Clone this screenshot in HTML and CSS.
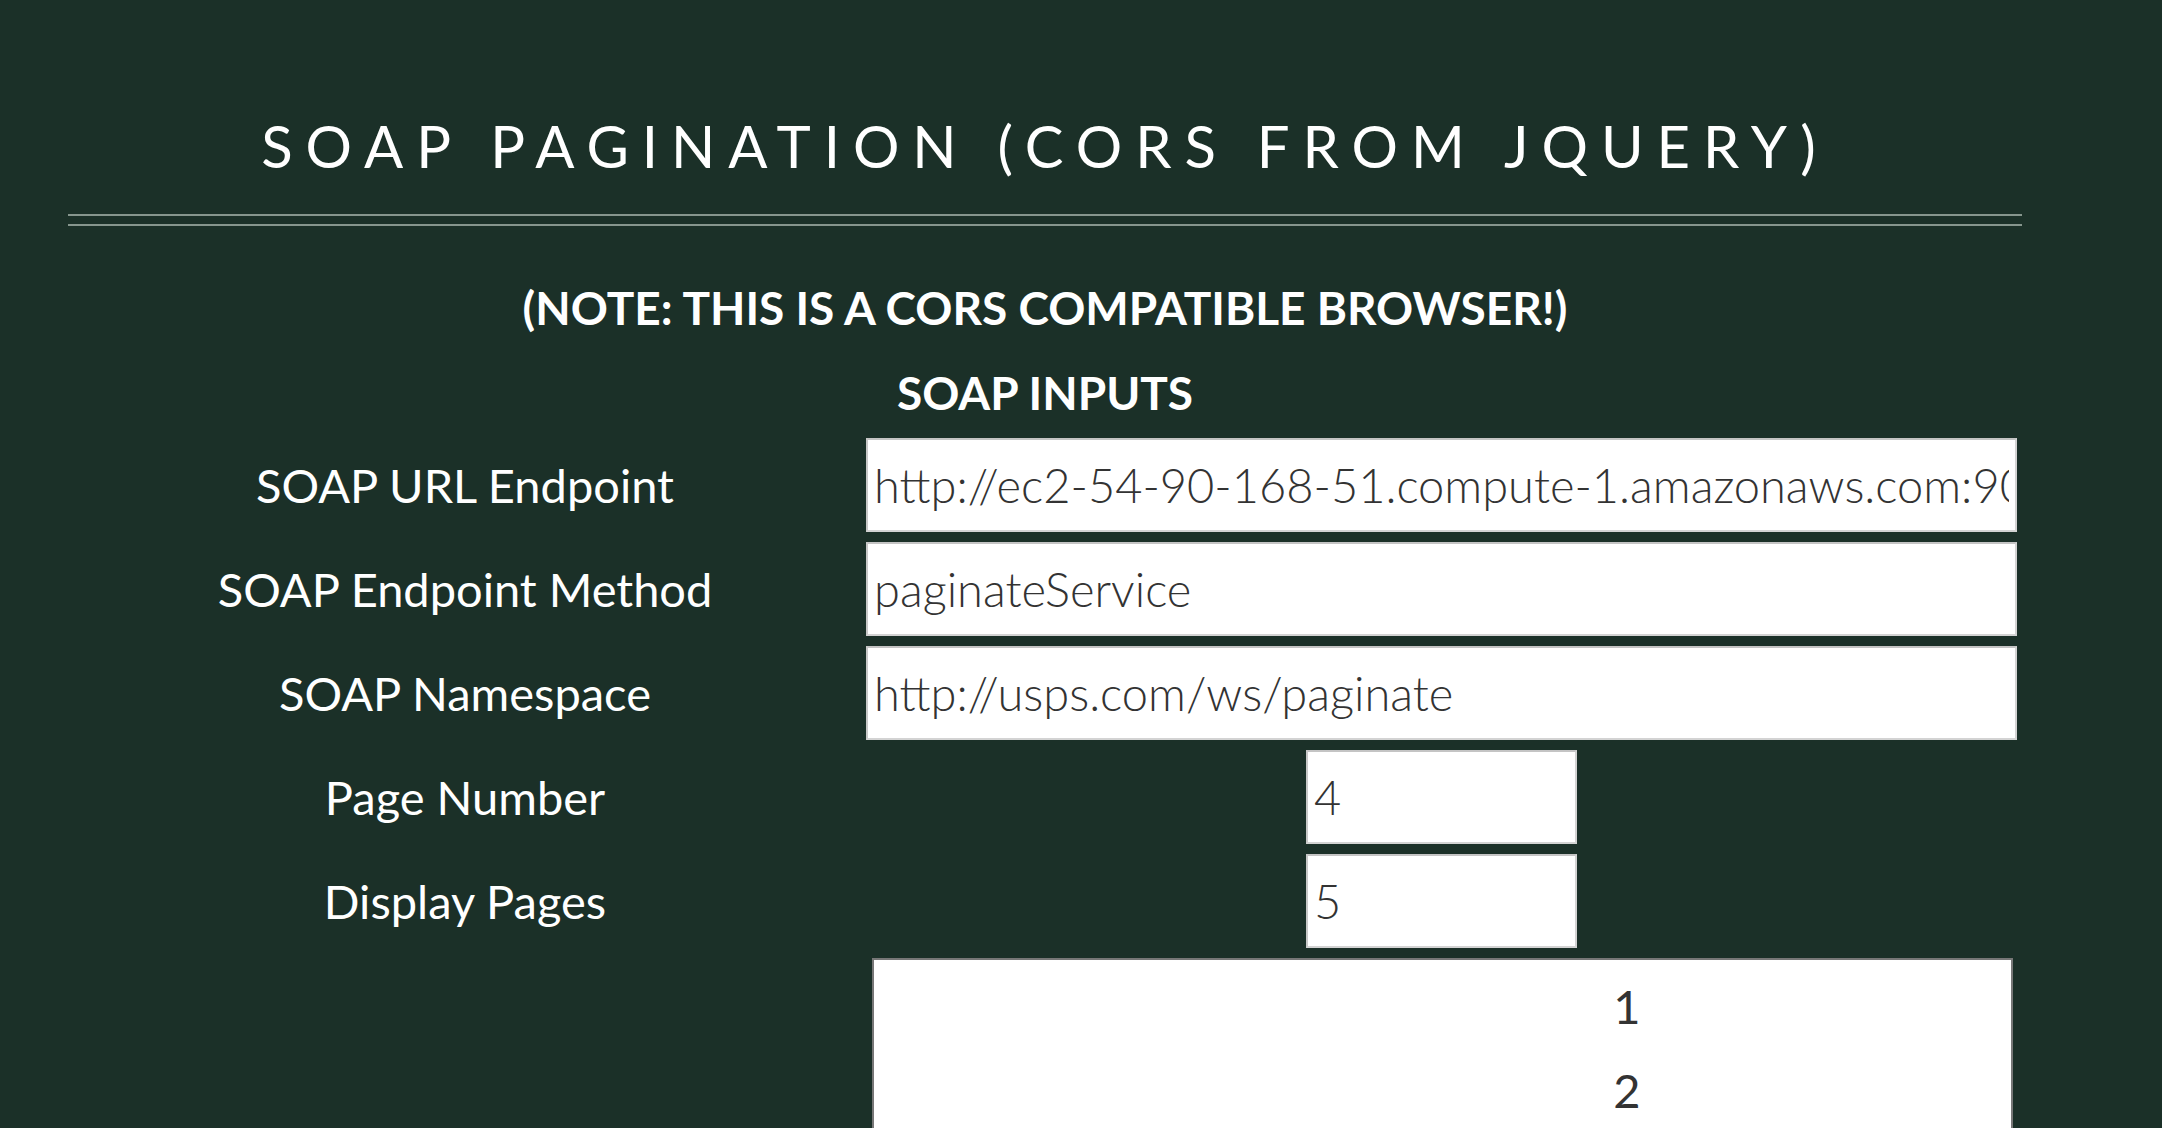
FILE: index.html
```html
<!DOCTYPE html>
<html lang="en">
<head>
<meta charset="utf-8">
<title>SOAP Pagination (CORS from jQuery)</title>
<link rel="stylesheet" href="styles.css">
</head>
<body>
<div class="page">
  <h1 class="title">SOAP Pagination (CORS from jQuery)</h1>
  <hr class="rule">
  <h2 class="note">(NOTE: THIS IS A CORS COMPATIBLE BROWSER!)</h2>
  <h3 class="section">SOAP INPUTS</h3>
  <form class="form">
    <label class="label" for="url">SOAP URL Endpoint</label>
    <div class="field"><input class="input" id="url" type="text" value="http://ec2-54-90-168-51.compute-1.amazonaws.com:9090/paginate/services"></div>
    <label class="label" for="method">SOAP Endpoint Method</label>
    <div class="field"><input class="input" id="method" type="text" value="paginateService"></div>
    <label class="label" for="ns">SOAP Namespace</label>
    <div class="field"><input class="input" id="ns" type="text" value="http://usps.com/ws/paginate"></div>
    <label class="label" for="page">Page Number</label>
    <div class="field field-center"><input class="input input-small" id="page" type="text" value="4"></div>
    <label class="label" for="display">Display Pages</label>
    <div class="field field-center"><input class="input input-small" id="display" type="text" value="5"></div>
    <div class="spacer"></div>
    <div class="results">
      <ul class="pages">
        <li>1</li>
        <li>2</li>
        <li>3</li>
        <li>4</li>
        <li>5</li>
      </ul>
    </div>
  </form>
</div>
</body>
</html>
```
FILE: styles.css
```css
html, body {
  margin: 0;
  padding: 0;
  background: #1b3028;
}
body {
  font-family: Lato, "Open Sans", sans-serif;
  color: #ffffff;
}
.page {
  margin-left: 68px;
  width: 1954px;
  padding-top: 1px;
}
.title {
  margin: 105px 0 0 0;
  text-align: center;
  font-size: 58px;
  font-weight: 400;
  line-height: 80px;
  letter-spacing: 13px;
  white-space: nowrap;
  text-transform: uppercase;
}
.rule {
  margin: 28px 0 0 0;
  height: 8px;
  border: 0;
  border-top: 2px solid #86958d;
  border-bottom: 2px solid #86958d;
}
.note {
  margin: 52px 0 0 0;
  text-align: center;
  font-size: 46px;
  font-weight: 700;
  line-height: 60px;
}
.section {
  margin: 25px 0 0 0;
  text-align: center;
  font-size: 46px;
  font-weight: 700;
  line-height: 60px;
}
.form {
  display: grid;
  grid-template-columns: 794px 1151px;
  column-gap: 4px;
  row-gap: 10px;
  margin-top: 15px;
  padding-bottom: 20px;
}
.label {
  display: flex;
  align-items: center;
  justify-content: center;
  font-size: 47px;
  font-weight: 400;
}
.field {
  display: flex;
}
.field-center {
  justify-content: center;
}
.input {
  box-sizing: border-box;
  width: 100%;
  height: 94px;
  margin: 0;
  padding: 0 6px;
  border: 2px solid #d3d3d3;
  border-top-color: #c4c4c4;
  border-left-color: #c8c8c8;
  background: #ffffff;
  font-family: Lato, "Open Sans", sans-serif;
  font-size: 47px;
  font-weight: 300;
  color: #333333;
  outline: none;
}
.input-small {
  width: 271px;
}
.results {
  margin: 0 4px 0 6px;
  background: #ffffff;
  border: 2px solid #777777;
}
.pages {
  list-style: none;
  margin: 4px 0 0 0;
  padding: 0 0 0 369px;
  text-align: center;
  color: #333333;
  font-size: 47px;
  line-height: 84px;
}
```
